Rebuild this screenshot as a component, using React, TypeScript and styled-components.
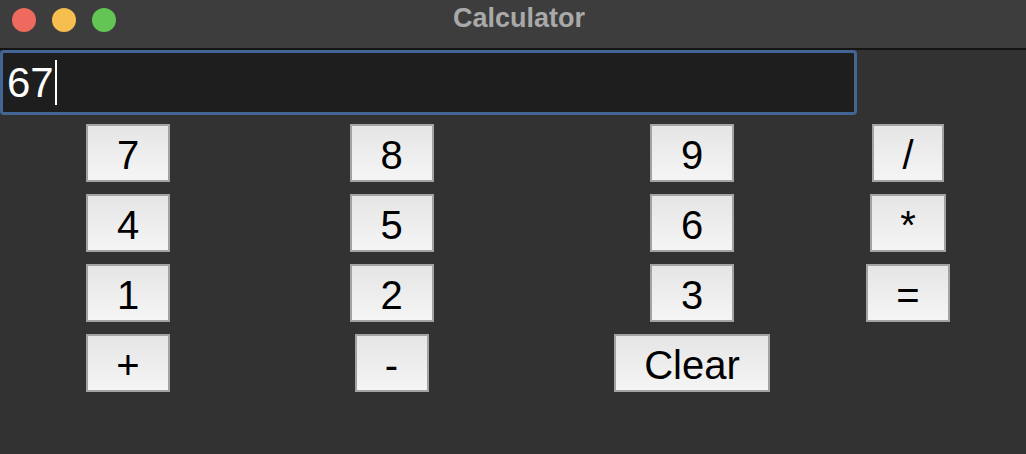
import React from "react";
import styled, { createGlobalStyle } from "styled-components";

const GlobalStyle = createGlobalStyle`
  html, body {
    margin: 0;
    padding: 0;
    background: #323232;
  }
  body {
    font-family: "Liberation Sans", Arial, sans-serif;
  }
`;

const Window = styled.div`
  width: 1026px;
  height: 454px;
  display: flex;
  flex-direction: column;
  background: #323232;
  overflow: hidden;
`;

const TitleBar = styled.div`
  height: 48px;
  display: grid;
  grid-template-columns: 1fr auto 1fr;
  align-items: start;
  background: #3d3d3d;
  border-bottom: 2px solid #141414;
`;

const Lights = styled.div`
  display: flex;
  gap: 16px;
  padding: 8px 0 0 12px;
`;

const Light = styled.span<{ $color: string }>`
  width: 24px;
  height: 24px;
  border-radius: 50%;
  background: ${(p) => p.$color};
`;

const Title = styled.div`
  margin: 3px 0 0 12px;
  font-size: 27px;
  line-height: 30px;
  font-weight: bold;
  color: #a9a9a9;
`;

const Body = styled.div`
  display: flex;
  flex-direction: column;
  gap: 9px;
`;

const Entry = styled.div`
  width: 857px;
  height: 65px;
  box-sizing: border-box;
  border: 3px solid #436593;
  border-radius: 4px;
  background: #1e1e1e;
  display: flex;
  align-items: center;
  padding-left: 4px;
  font-size: 42px;
  color: #ffffff;
`;

const Caret = styled.span`
  width: 2px;
  height: 45px;
  margin-left: 1px;
  background: #ffffff;
`;

const Pad = styled.div`
  display: grid;
  grid-template-columns: 256px 271px 330px 102px;
  grid-auto-rows: 58px;
  row-gap: 12px;
`;

const Key = styled.button<{ $w: number }>`
  justify-self: center;
  width: ${(p) => p.$w}px;
  height: 58px;
  box-sizing: border-box;
  padding: 4px 0 0;
  border: 2px solid #a3a3a3;
  border-radius: 0;
  background: linear-gradient(#e5e5e5, #f5f5f5);
  font-family: "Liberation Sans", Arial, sans-serif;
  font-size: 40px;
  line-height: 1;
  color: #000000;
`;

const keys: [string, number][] = [
  ["7", 84], ["8", 84], ["9", 84], ["/", 72],
  ["4", 84], ["5", 84], ["6", 84], ["*", 76],
  ["1", 84], ["2", 84], ["3", 84], ["=", 84],
  ["+", 84], ["-", 74], ["Clear", 156],
];

const App = () => {
  return (
    <Window>
      <GlobalStyle />
      <TitleBar>
        <Lights>
          <Light $color="#ee6a5f" />
          <Light $color="#f5be4f" />
          <Light $color="#62c554" />
        </Lights>
        <Title>Calculator</Title>
        <div />
      </TitleBar>
      <Body>
        <Entry>
          67
          <Caret />
        </Entry>
        <Pad>
          {keys.map(([label, w]) => (
            <Key key={label} $w={w}>
              {label}
            </Key>
          ))}
        </Pad>
      </Body>
    </Window>
  );
};

export default App;
